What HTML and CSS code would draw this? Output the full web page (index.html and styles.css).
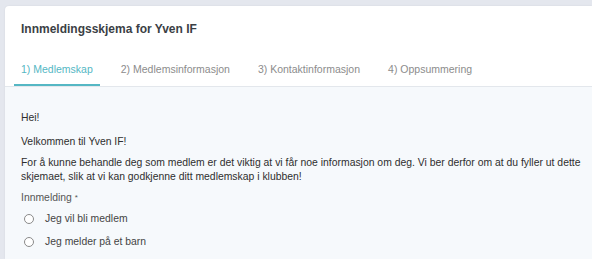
FILE: index.html
```html
<!DOCTYPE html>
<html lang="no">
<head>
  <meta charset="UTF-8">
  <meta name="viewport" content="width=device-width, initial-scale=1.0">
  <title>Innmeldingsskjema for Yven IF</title>
  <link rel="stylesheet" href="styles.css">
</head>
<body>
  <section class="card">
    <header class="card_head">
      <h2>Innmeldingsskjema for Yven IF</h2>
      <ul class="steps">
        <li class="on">1) Medlemskap</li>
        <li>2) Medlemsinformasjon</li>
        <li>3) Kontaktinformasjon</li>
        <li>4) Oppsummering</li>
      </ul>
    </header>

    <article class="card_body">
      <p>Hei!</p>
      <p>Velkommen til Yven IF!</p>
      <p>For å kunne behandle deg som medlem er det viktig at vi får noe informasjon om deg. Vi ber derfor om at du fyller ut dette skjemaet, slik at vi kan godkjenne ditt medlemskap i klubben!</p>

      <div class="field">
        <span class="label">Innmelding <i>*</i></span>
        <label class="radio"><input type="radio" name="type"><span class="dot"></span>Jeg vil bli medlem</label>
        <label class="radio"><input type="radio" name="type"><span class="dot"></span>Jeg melder på et barn</label>
      </div>
    </article>
  </section>
</body>
</html>
```

FILE: styles.css
```css
* {margin:0; padding:0; box-sizing: border-box;}
ul,li{
  list-style: none;
}

html, body{
  height: 100%;
}

body{
  background: #e4e7ee;
  padding: 6px 0 0 5px;
  overflow: hidden;
  font-family: "Liberation Sans", Arial, sans-serif;
  color: #333;
}

.card{
  background: #fff;
  border-radius: 4px 0 0 0;
  box-shadow: 0 0 2px rgba(0,0,0,0.08);
  height: 100%;
  display: flex;
  flex-direction: column;
}

.card_head{
  padding: 15px 0 0 0;
  border-bottom: 1px solid #e3e7ec;
}

.card_head > h2{
  font-size: 12px;
  line-height: 16px;
  font-weight: bold;
  color: #3b3f45;
  padding-left: 16px;
}

.steps{
  display: flex;
  gap: 14px;
  margin-top: 25px;
  padding-left: 9px;
}

.steps > li{
  font-size: 10.5px;
  line-height: 14px;
  color: #8c8c8c;
  padding: 0 7px 8px;
  border-bottom: 2px solid transparent;
}

.steps > li.on{
  color: #55b7c4;
  border-bottom-color: #55b7c4;
}

.card_body{
  flex: 1;
  background: #f6f9fc;
  padding: 24px 0 0 16px;
}

.card_body > p{
  font-size: 10.4px;
  line-height: 14px;
  margin-bottom: 7px;
  color: #2e2e2e;
}

.card_body > p:first-child{
  margin-bottom: 10px;
}

.field{
  margin-top: 6px;
}

.label{
  display: block;
  font-size: 10.4px;
  line-height: 14px;
  color: #555;
}

.label > i{
  font-style: normal;
  font-size: 8px;
  vertical-align: top;
}

.radio{
  display: flex;
  align-items: center;
  font-size: 10.4px;
  line-height: 14px;
  color: #444;
  margin-top: 7px;
  padding-left: 3px;
}

.radio + .radio{
  margin-top: 9px;
}

.radio > input{
  display: none;
}

.dot{
  width: 10px;
  height: 10px;
  border: 1px solid #8a8a8a;
  border-radius: 50%;
  background: #fff;
  margin-right: 11px;
}
```
